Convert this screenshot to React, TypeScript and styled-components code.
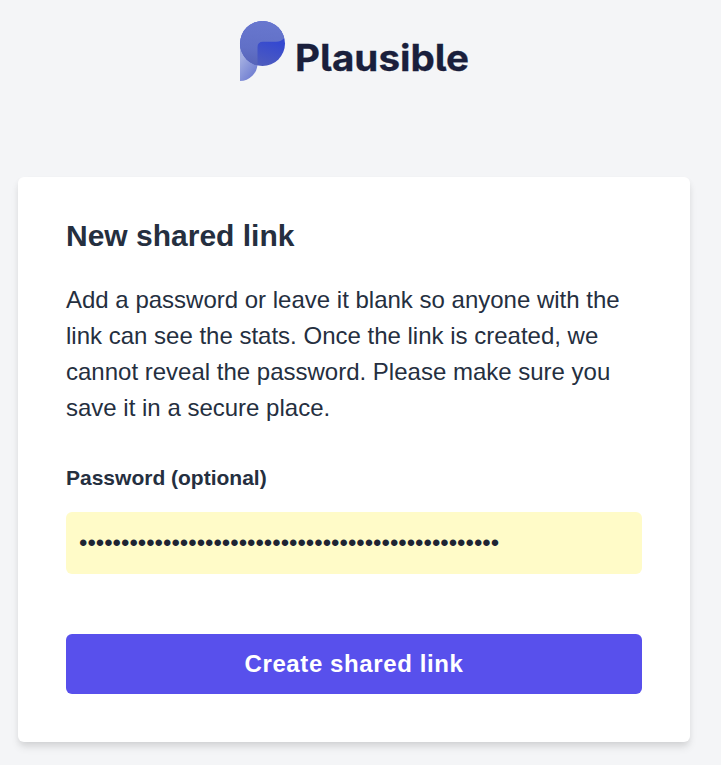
import React from 'react';
import styled, { createGlobalStyle } from 'styled-components';

const GlobalStyle = createGlobalStyle`
  *, *::before, *::after { box-sizing: border-box; }
  body {
    margin: 0;
    background: #f4f5f7;
    color: #252f3f;
    font-family: "Liberation Sans", Arial, sans-serif;
  }
`;

const Page = styled.div`
  min-height: 765px;
  padding: 0 31px 0 18px;
`;

const Header = styled.header`
  display: flex;
  justify-content: center;
  height: 177px;
  padding-top: 18px;
`;

const Logo = styled.svg`
  display: block;
  width: 236px;
  height: 66px;
`;

const Wordmark = styled.text`
  font-family: Inter, "Liberation Sans", sans-serif;
  font-size: 36.5px;
  font-weight: 700;
  font-feature-settings: "cv05" 1;
  fill: #1a1f3c;
  stroke: #1a1f3c;
  stroke-width: 0.3px;
`;

const Card = styled.form`
  display: flex;
  flex-direction: column;
  height: 565px;
  padding: 36px 48px 48px;
  background: #fff;
  border-radius: 6px;
  box-shadow: 0 6px 9px -1.5px rgba(0, 0, 0, 0.1), 0 3px 6px -1.5px rgba(0, 0, 0, 0.06);
`;

const Title = styled.h2`
  margin: 0 0 24px;
  font-size: 30px;
  line-height: 45px;
  font-weight: 700;
`;

const Description = styled.p`
  margin: 0;
  font-size: 24px;
  line-height: 36px;
`;

const Label = styled.label`
  margin: 36px 0 18px;
  font-size: 21px;
  line-height: 32px;
  height: 32px;
  font-weight: 700;
`;

const PasswordInput = styled.input`
  width: 100%;
  height: 62px;
  padding: 12px 13px;
  border: 0;
  border-radius: 6px;
  outline: none;
  background: #fffbc8;
  color: #1e2433;
  font-family: inherit;
  font-size: 24px;
  line-height: 36px;
`;

const SubmitButton = styled.button`
  width: 100%;
  height: 60px;
  margin-top: auto;
  padding: 0;
  border: 0;
  border-radius: 6px;
  background: #5850ec;
  color: #fff;
  font-family: inherit;
  font-size: 24px;
  line-height: 36px;
  font-weight: 700;
  letter-spacing: 0.6px;
`;

function PlausibleLogo() {
  return (
    <Logo viewBox="0 0 236 66" role="img" aria-label="Plausible">
      <defs>
        <linearGradient id="stem" gradientUnits="userSpaceOnUse" x1="4" y1="42" x2="20" y2="54">
          <stop offset="0" stopColor="#a3aee1" />
          <stop offset="1" stopColor="#7280d2" />
        </linearGradient>
        <linearGradient id="bowl" gradientUnits="userSpaceOnUse" x1="36" y1="23" x2="27" y2="48">
          <stop offset="0" stopColor="#3549d0" />
          <stop offset="1" stopColor="#4e5cbe" />
        </linearGradient>
        <linearGradient id="overlap" gradientUnits="userSpaceOnUse" x1="20" y1="3" x2="16" y2="48">
          <stop offset="0" stopColor="#6877ce" />
          <stop offset="0.6" stopColor="#6170c7" />
          <stop offset="1" stopColor="#5663b8" />
        </linearGradient>
        <clipPath id="disc">
          <circle cx="26.5" cy="25.5" r="22.5" />
        </clipPath>
      </defs>
      <path d="M4 26H21.5V45.5A17.5 17.5 0 0 1 4 63Z" fill="url(#stem)" />
      <circle cx="26.5" cy="25.5" r="22.5" fill="url(#bowl)" />
      <path
        clipPath="url(#disc)"
        d="M2 1H51V16Q47 23.8 40 23.8H27Q21.5 23.8 21.5 29.3V49H2Z"
        fill="url(#overlap)"
      />
      <Wordmark x="59" y="53" textLength="174" lengthAdjust="spacingAndGlyphs">
        Plausible
      </Wordmark>
    </Logo>
  );
}

export default function App() {
  return (
    <>
      <GlobalStyle />
      <Page>
        <Header>
          <PlausibleLogo />
        </Header>
        <Card onSubmit={(event) => event.preventDefault()}>
          <Title>New shared link</Title>
          <Description>
            Add a password or leave it blank so anyone with the link can see the stats. Once the
            link is created, we cannot reveal the password. Please make sure you save it in a
            secure place.
          </Description>
          <Label htmlFor="password">Password (optional)</Label>
          <PasswordInput id="password" type="password" defaultValue={'x'.repeat(50)} />
          <SubmitButton type="submit">Create shared link</SubmitButton>
        </Card>
      </Page>
    </>
  );
}
